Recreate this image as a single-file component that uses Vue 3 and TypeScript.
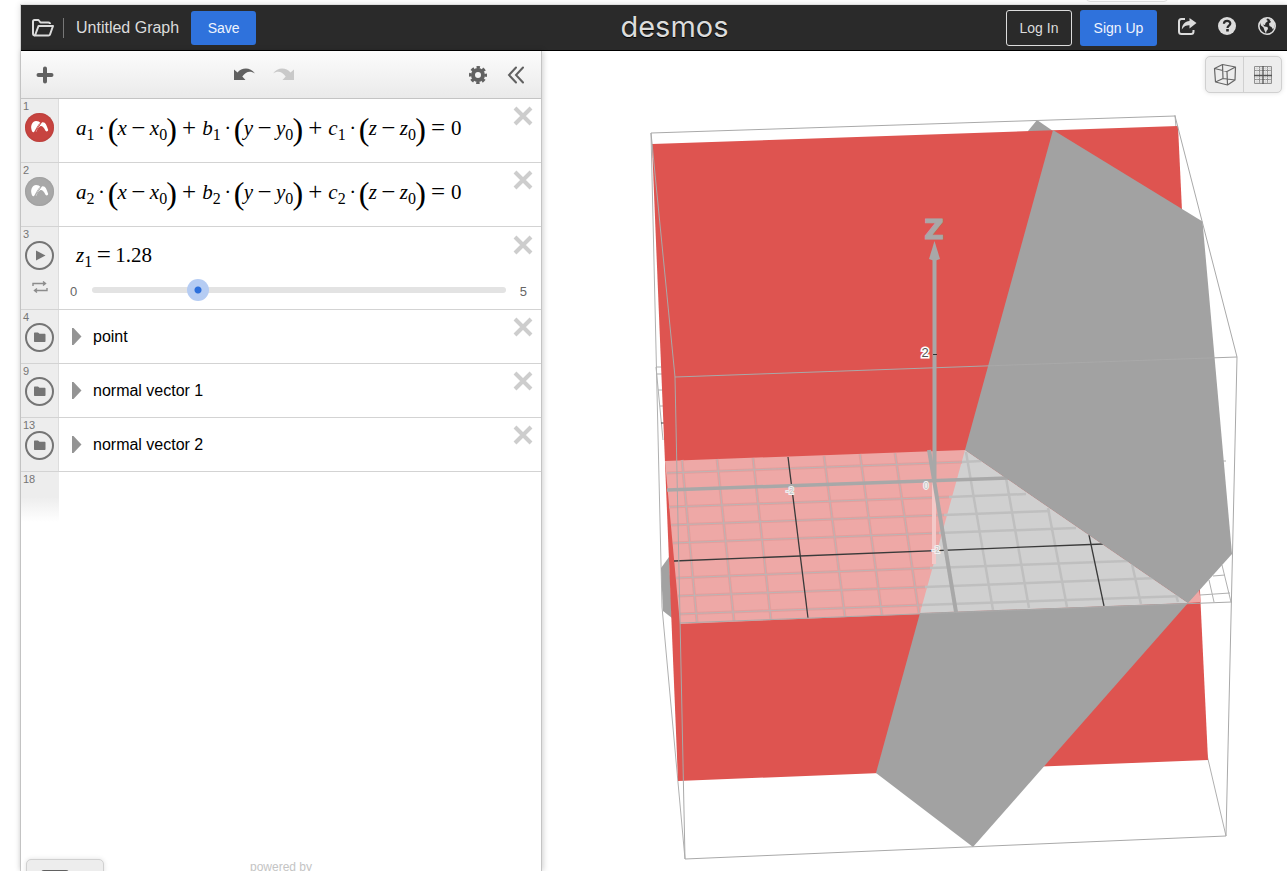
<script setup lang="ts">
import { ref } from 'vue'

type Token = { kind: 'var' | 'dot' | 'paren' | 'minus' | 'op' | 'digit'; text: string; sub?: string }

const v = (text: string, sub?: string): Token => ({ kind: 'var', text, sub })
const term = (coef: string, idx: string, name: string): Token[] => [
  v(coef, idx),
  { kind: 'dot', text: '·' },
  { kind: 'paren', text: '(' },
  v(name),
  { kind: 'minus', text: '−' },
  v(name, '0'),
  { kind: 'paren', text: ')' },
]
const plane = (idx: string): Token[] => [
  ...term('a', idx, 'x'),
  { kind: 'op', text: '+' },
  ...term('b', idx, 'y'),
  { kind: 'op', text: '+' },
  ...term('c', idx, 'z'),
  { kind: 'op', text: '=' },
  { kind: 'digit', text: '0' },
]

const planes = [
  { id: 1, tone: 'red', tokens: plane('1') },
  { id: 2, tone: 'gray', tokens: plane('2') },
]
const folders = [
  { id: 4, name: 'point' },
  { id: 9, name: 'normal vector 1' },
  { id: 13, name: 'normal vector 2' },
]
const z1 = ref(1.28)

type Line = [number, number, number, number]
const pinkGrid: Line[] = [
  [682, 460, 697, 622], [717, 459, 734, 621], [753, 458, 771, 620], [824, 456, 845, 617],
  [860, 454, 882, 615], [895, 453, 919, 613],
  [667, 473, 962, 462], [669, 507, 949, 497], [671, 525, 944, 515], [673, 543, 939, 533],
  [676, 578, 930, 568], [678, 596, 925, 587], [679, 614, 922, 605],
]
const grayGrid: Line[] = [
  [966, 452, 993, 610], [1006, 478, 1029, 608], [1048, 508, 1067, 607], [1132, 564, 1141, 604], [1176, 595, 1178, 602],
  [962, 462, 981, 461], [949, 497, 1026, 494], [944, 515, 1050, 511], [939, 533, 1076, 528],
  [930, 568, 1128, 561], [925, 587, 1158, 578], [922, 605, 1184, 596],
]
const darkGrid: Line[] = [
  [788, 457, 808, 618], [674, 561, 1103, 544], [1089, 535, 1104, 606],
]
const outerGrid: Line[] = [
  [656, 367, 662, 367], [656, 374, 662, 374], [658, 390, 663, 390], [660, 406, 663, 406],
  [1209, 580, 1214, 602], [1222, 565, 1231, 602], [1213, 576, 1225, 575], [1200, 595, 1230, 593],
  [656, 367, 663, 440], [1223, 461, 1226, 461],
]
const boxBack: Line[] = [
  [651, 133, 662, 607], [662, 607, 685, 859], [1175, 115, 1176, 128], [1200, 725, 1226, 836],
]
const boxFront: Line[] = [
  [651, 133, 1175, 116], [1175, 116, 1237, 357], [1237, 357, 1226, 836], [685, 859, 1226, 836],
  [651, 133, 675, 377], [675, 377, 685, 859], [680, 623, 1232, 602],
]
</script>

<template>
  <div class="page">
    <div class="tab-edge"></div>
    <div class="app">
      <header class="header">
        <div class="group">
          <button class="icon-btn" aria-label="Open graph">
            <svg width="22" height="18" viewBox="0 0 22 18" fill="none" stroke="#dcdcdc" stroke-width="2" stroke-linejoin="round">
              <path d="M3 16.500C1.500 16.500 1 15.500 1 14.500V2.500C1 1.500 1.500 1 2.500 1H6.500L8.500 3.500H16.500C17.500 3.500 18 4 18 5" />
              <path d="M3 16.500L6.500 7H21L18 15.500C17.800 16.200 17.300 16.500 16.500 16.500Z" />
            </svg>
          </button>
          <span class="divider"></span>
          <span class="title">Untitled Graph</span>
          <button class="btn primary save">Save</button>
        </div>
        <a class="logo" href="#">desmos</a>
        <div class="group right">
          <button class="btn outline">Log In</button>
          <button class="btn primary signup">Sign Up</button>
          <button class="icon-btn small" aria-label="Share">
            <svg width="20" height="20" viewBox="0 0 20 20">
              <path d="M8 3H4.500C3 3 2 4 2 5.500V15.500C2 17 3 18 4.500 18H14C15.500 18 16.500 17 16.500 15.500V14" fill="none" stroke="#dcdcdc" stroke-width="2" />
              <path d="M12.500 2L19.500 7L12.500 12.500V9.300C9.500 9.200 7 10 4.800 13.500C5 8.500 8 5.300 12.500 5Z" fill="#dcdcdc" />
            </svg>
          </button>
          <button class="icon-btn small" aria-label="Help">
            <svg width="20" height="20" viewBox="0 0 20 20">
              <circle cx="10" cy="10" r="9" fill="#dcdcdc" />
              <path d="M6.900 7.800C7 5.800 8.300 4.900 10.100 4.900C12 4.900 13.300 5.900 13.300 7.500C13.300 9.500 10.500 9.700 10.500 11.900" fill="none" stroke="#2a2a2a" stroke-width="2.200" />
              <rect x="9.200" y="13" width="2.600" height="2.500" fill="#2a2a2a" />
            </svg>
          </button>
          <button class="icon-btn small" aria-label="Language">
            <svg width="20" height="20" viewBox="0 0 20 20">
              <circle cx="10" cy="10" r="8.200" fill="none" stroke="#dcdcdc" stroke-width="1.600" />
              <path d="M3 6.500C4.500 3.500 7 2 10 2L9.500 4L11 5L8.500 7L8 9L6 8.500L7.500 10.500L10.500 11L11 13L9.500 15L9 17.500L7.500 14.500L6.500 11.500L4 9.500ZM12 3L15.500 4L17.500 7.500V11L16 13.500L14.500 11L12.500 10L12 7.500L14 6Z" fill="#dcdcdc" />
            </svg>
          </button>
        </div>
      </header>

      <main class="body">
        <section class="panel">
          <div class="toolbar">
            <button class="tool plus" aria-label="Add item">
              <svg width="18" height="18" viewBox="0 0 18 18" stroke="#616161" stroke-width="4" stroke-linecap="round"><path d="M9 2.500V15.500M2.500 9H15.500" /></svg>
            </button>
            <div class="tools history">
              <button class="tool" aria-label="Undo">
                <svg width="21" height="14" viewBox="0 0 21 14"><path d="M0 1.500L3.500 4.500C7.500 -0.500 16 -1.500 21 5.500C16.500 2.500 12 3 8.300 8.500L11.500 12H0Z" fill="#616161" /></svg>
              </button>
              <button class="tool" aria-label="Redo" disabled>
                <svg width="21" height="14" viewBox="0 0 21 14"><path d="M21 1.500L17.500 4.500C13.500 -0.500 5 -1.500 0 5.500C4.500 2.500 9 3 12.700 8.500L9.500 12H21Z" fill="#c9c9c9" /></svg>
              </button>
            </div>
            <div class="tools">
              <button class="tool" aria-label="Settings">
                <svg width="20" height="20" viewBox="0 0 20 20" fill="none" stroke="#616161">
                  <circle cx="10" cy="10" r="5" stroke-width="4" />
                  <circle cx="10" cy="10" r="7.700" stroke-width="2.600" stroke-dasharray="3.400 2.650" stroke-dashoffset="1.700" />
                </svg>
              </button>
              <button class="tool" aria-label="Hide list">
                <svg width="18" height="18" viewBox="0 0 18 18" fill="none" stroke="#616161" stroke-width="2" stroke-linecap="round"><path d="M9 1.500L2 9L9 16.500M16 1.500L9 9L16 16.500" /></svg>
              </button>
            </div>
          </div>

          <div class="list">
            <div v-for="p in planes" :key="p.id" class="row">
              <div class="gutter">
                <span class="num">{{ p.id }}</span>
                <button class="bubble" :class="p.tone" :aria-label="`Toggle surface ${p.id}`">
                  <svg width="29" height="29" viewBox="0 0 29 29" fill="#fff">
                    <path d="M6.200 15C6 12 7.500 8 11 8C13.500 8 14.500 9 15.400 9.800C12.500 12 11.500 15 9 19.300C7 19.500 6.500 17 6.200 15Z" />
                    <path d="M10.300 19C12 15 14 10.500 17.500 9.300C20.500 9 21.500 12 23.200 17C23 18.500 21.500 18.800 20.500 17.800C19 14.500 17 12.500 15.500 13C13.500 14 12.500 16 11.200 18.800Z" />
                    <path d="M10 19L16.500 9.300" fill="none" :stroke="p.tone === 'red' ? '#c74440' : '#a8a8a8'" stroke-width="1" />
                  </svg>
                </button>
              </div>
              <div class="math">
                <span v-for="(t, i) in p.tokens" :key="i" class="tok" :class="t.kind">{{ t.text }}<sub v-if="t.sub">{{ t.sub }}</sub></span>
              </div>
              <button class="close" :aria-label="`Delete ${p.id}`">
                <svg width="20" height="20" viewBox="0 0 20 20" stroke="#cdcdcd" stroke-width="4"><path d="M2 2L18 18M18 2L2 18" /></svg>
              </button>
            </div>

            <div class="row slider-row">
              <div class="gutter">
                <span class="num">3</span>
                <button class="bubble ring" aria-label="Play">
                  <svg width="25" height="25" viewBox="0 0 25 25"><path d="M9 7.500L18.500 12.500L9 17.500Z" fill="#757575" /></svg>
                </button>
                <button class="loop" aria-label="Loop mode">
                  <svg width="16" height="12" viewBox="0 0 16 12" fill="none" stroke="#8c8c8c" stroke-width="1.400">
                    <path d="M1 5V2.500H13M11 0.500L13.500 2.500L11 4.500M15 7V9.500H3M5 7.500L2.500 9.500L5 11.500" />
                  </svg>
                </button>
              </div>
              <div class="slider-body">
                <div class="math short">
                  <span class="tok var">z<sub>1</sub></span><span class="tok minus">=</span><span class="tok digit">{{ z1 }}</span>
                </div>
                <label class="slider">
                  <span class="bound">0</span>
                  <span class="track"><input v-model.number="z1" type="range" min="0" max="5" step="0.01" aria-label="z1" /></span>
                  <span class="bound end">5</span>
                </label>
              </div>
              <button class="close" aria-label="Delete 3">
                <svg width="20" height="20" viewBox="0 0 20 20" stroke="#cdcdcd" stroke-width="4"><path d="M2 2L18 18M18 2L2 18" /></svg>
              </button>
            </div>

            <div v-for="f in folders" :key="f.id" class="row folder">
              <div class="gutter">
                <span class="num">{{ f.id }}</span>
                <button class="bubble ring" :aria-label="`Toggle folder ${f.name}`">
                  <svg width="25" height="25" viewBox="0 0 25 25"><path d="M7 8.500C7 7.700 7.300 7.500 8 7.500H11L12.500 8.800H17.500C18.200 8.800 18.500 9.200 18.500 9.800V16C18.500 16.700 18.200 17 17.500 17H8C7.300 17 7 16.700 7 16Z" fill="#757575" /></svg>
                </button>
              </div>
              <div class="folder-body">
                <button class="arrow" :aria-label="`Expand ${f.name}`">
                  <svg width="10" height="18" viewBox="0 0 10 18"><path d="M0 0H1.500L9.500 8.500L1.500 17H0Z" fill="#949494" /></svg>
                </button>
                <span>{{ f.name }}</span>
              </div>
              <button class="close" :aria-label="`Delete ${f.name}`">
                <svg width="20" height="20" viewBox="0 0 20 20" stroke="#cdcdcd" stroke-width="4"><path d="M2 2L18 18M18 2L2 18" /></svg>
              </button>
            </div>

            <div class="new-row"><span class="num">18</span></div>
          </div>

          <footer class="foot">
            <button class="keypad" aria-label="Show keypad">
              <svg width="28" height="18" viewBox="0 0 28 18"><rect x="1" y="1" width="26" height="16" rx="2" fill="none" stroke="#616161" stroke-width="2" /></svg>
            </button>
            <span>powered by</span>
          </footer>
        </section>

        <section class="graph">
          <svg class="scene" viewBox="542 51 745 820" role="img" aria-label="3D graph">
            <g stroke="#b0b0b0" stroke-width="1">
              <line v-for="(l, i) in boxBack" :key="i" :x1="l[0]" :y1="l[1]" :x2="l[2]" :y2="l[3]" />
              <line v-for="(l, i) in outerGrid" :key="i" :x1="l[0]" :y1="l[1]" :x2="l[2]" :y2="l[3]" />
              <line x1="661" y1="423" x2="665" y2="423" stroke="#444" />
            </g>
            <polygon points="669,557 661,568 663,611 672,618" fill="#a2a2a2" />
            <polygon points="1028,131 1037,120 1053,131 1053,135 1028,135" fill="#a2a2a2" />
            <polygon points="652,144 1178,126 1208,760 678,781" fill="#de5450" />
            <polygon points="665,461 965,450 1188,603 680,624" fill="#eea8a6" />
            <polygon points="1199,590 1187,603 1201,602" fill="#eea8a6" />
            <polygon points="965,450 1188,603 920,613" fill="#d0d0d0" />
            <g stroke="#e59e9c" stroke-width="3"><line v-for="(l, i) in pinkGrid" :key="i" :x1="l[0]" :y1="l[1]" :x2="l[2]" :y2="l[3]" /></g>
            <g stroke="#bcb4b4" stroke-width="1"><line v-for="(l, i) in pinkGrid" :key="i" :x1="l[0]" :y1="l[1]" :x2="l[2]" :y2="l[3]" /></g>
            <g stroke="#bfbfbf" stroke-width="2.500"><line v-for="(l, i) in grayGrid" :key="i" :x1="l[0]" :y1="l[1]" :x2="l[2]" :y2="l[3]" /></g>
            <g stroke="#3a3a3a" stroke-width="1.300"><line v-for="(l, i) in darkGrid" :key="i" :x1="l[0]" :y1="l[1]" :x2="l[2]" :y2="l[3]" /></g>
            <line x1="934" y1="482" x2="934" y2="564" stroke="#f3c9c8" stroke-width="4" />
            <line x1="667" y1="490" x2="1008" y2="478" stroke="#a8a8a8" stroke-width="3.500" />
            <polygon points="1053,130 1202.500,221.500 1232,554 1188,603 965,450" fill="#a2a2a2" />
            <polygon points="920,613 1188,603 973,847 876,773" fill="#a2a2a2" />
            <g stroke="#a9a9a9" stroke-width="1">
              <line v-for="(l, i) in boxFront" :key="i" :x1="l[0]" :y1="l[1]" :x2="l[2]" :y2="l[3]" />
              <line x1="675" y1="377" x2="1237" y2="357" />
            </g>
            <line x1="929" y1="450" x2="956" y2="612" stroke="#a8a8a8" stroke-width="4" />
            <line x1="934.500" y1="256" x2="934.500" y2="481" stroke="#a8a8a8" stroke-width="4" />
            <polygon points="934.500,241 940,259 934.500,261 929,259" fill="#a8a8a8" />
            <line x1="933" y1="354.500" x2="937" y2="354.500" stroke="#333" stroke-width="1" />
            <text x="934" y="239" class="axis-name">Z</text>
            <text x="925" y="357" class="tick">2</text>
            <g class="flat-tick">
              <text x="926" y="489">0</text>
              <text x="790" y="494">-2</text>
              <text x="936" y="553">-2</text>
            </g>
          </svg>
          <div class="views">
            <button aria-label="3D view">
              <svg width="24" height="24" viewBox="0 0 24 24" fill="none" stroke="#666" stroke-width="1.200" stroke-linejoin="round">
                <path d="M1.500 5.500L14 8.500L22.500 4L9.500 1.500ZM1.500 5.500L2.500 19L14.500 22L22 17L22.500 4M14 8.500L14.500 22M9.500 1.500L10 15.500L2.500 19M10 15.500L22 17" />
              </svg>
            </button>
            <button aria-label="2D view">
              <svg width="20" height="20" viewBox="0 0 20 20" fill="none">
                <path d="M1.500 1.500H18.500V18.500H1.500ZM6.500 1V19M14.500 1V19M1 5.500H19M1 14.500H19" stroke="#909090" stroke-width="1" />
                <path d="M4 2V18M12.500 2V18M8 2V18M17 2V18M2 3.500H18M2 8H18M2 12.500H18M2 17H18" stroke="#ccc" stroke-width="0.600" />
                <path d="M10 1V19M1 10.500H19" stroke="#555" stroke-width="1.300" />
              </svg>
            </button>
          </div>
        </section>
      </main>
    </div>
  </div>
</template>

<style>
body {
  margin: 0;
  background: #fff;
}
</style>

<style scoped>
* {
  box-sizing: border-box;
}
.page {
  position: relative;
  height: 100vh;
  padding: 4px 0 0 20px;
  overflow: hidden;
  font-family: "Liberation Sans", Arial, sans-serif;
}
.tab-edge {
  position: absolute;
  top: -8px;
  right: 119px;
  width: 82px;
  height: 10px;
  border: 1px solid #dcdcdc;
  border-radius: 4px;
}
.app {
  display: flex;
  flex-direction: column;
  height: 100%;
  border-top: 1px solid #ddd;
  border-left: 1px solid #d0d0d0;
  box-shadow: 0 0 6px rgba(0, 0, 0, 0.12);
}
button {
  margin: 0;
  padding: 0;
  border: 0;
  background: none;
  font-family: inherit;
  cursor: pointer;
}
svg {
  display: block;
}
.header {
  display: grid;
  grid-template-columns: 1fr auto 1fr;
  align-items: center;
  flex: none;
  height: 46px;
  padding: 0 10px 0 11px;
  background: #2a2a2a;
  border-bottom: 1px solid #000;
}
.group {
  display: flex;
  align-items: center;
}
.group.right {
  justify-content: flex-end;
}
.divider {
  width: 1px;
  height: 20px;
  margin: 0 12px 0 9px;
  background: #777;
}
.title {
  color: #dcdcdc;
  font-size: 16px;
  line-height: 20px;
}
.btn {
  border-radius: 3px;
  font-size: 14px;
  line-height: 20px;
}
.primary {
  background: #2f72dc;
  color: #f0f4fc;
}
.save {
  width: 65px;
  height: 34px;
  margin-left: 12px;
}
.outline {
  width: 66px;
  height: 36px;
  border: 1px solid #dcdcdc;
  color: #dcdcdc;
}
.signup {
  width: 77px;
  height: 36px;
  margin-left: 8px;
}
.small {
  margin-left: 20px;
  padding-bottom: 4px;
}
.logo {
  padding: 0 0 2px 40px;
  color: #dcdcdc;
  font-family: Inter, sans-serif;
  font-size: 29px;
  line-height: 36px;
  text-decoration: none;
  text-shadow: 0 1px 1px #000;
}
.body {
  display: flex;
  flex: 1;
  min-height: 0;
}
.panel {
  position: relative;
  z-index: 1;
  display: flex;
  flex-direction: column;
  flex: none;
  width: 521px;
  border-right: 1px solid #c4c4c4;
  background: #fff;
  box-shadow: 1px 0 6px rgba(0, 0, 0, 0.2);
}
.toolbar {
  display: flex;
  align-items: center;
  justify-content: space-between;
  flex: none;
  height: 48px;
  padding: 0 16px 0 12px;
  border-bottom: 1px solid #c4c4c4;
  background: linear-gradient(#fcfcfc, #eaeaea);
}
.plus {
  display: flex;
  justify-content: center;
  width: 24px;
}
.tools {
  display: flex;
  align-items: center;
  gap: 19px;
}
.history {
  gap: 18px;
  padding-left: 2px;
}
.list {
  flex: 1;
  min-height: 0;
}
.row {
  display: flex;
  height: 64px;
  border-bottom: 1px solid #d3d3d3;
}
.slider-row {
  height: 83px;
}
.folder {
  height: 54px;
}
.gutter {
  flex: none;
  width: 38px;
  padding: 1px 0 0 2px;
  border-right: 1px solid #ddd;
  background: #ededed;
}
.num {
  display: block;
  color: #757575;
  font-size: 11px;
  line-height: 13px;
}
.folder .num {
  line-height: 12px;
}
.bubble {
  display: block;
  width: 29px;
  height: 29px;
  margin-left: 2px;
  border-radius: 50%;
}
.red {
  background: #c74440;
  box-shadow: inset 0 0 2px #a93733;
}
.gray {
  background: #a8a8a8;
  box-shadow: inset 0 0 2px #8f8f8f;
}
.ring {
  border: 2px solid #757575;
}
.loop {
  display: block;
  margin: 11px 0 0 9px;
}
.math {
  display: flex;
  flex: 1;
  padding: 17px 0 0 17px;
  color: #000;
  font-family: "Liberation Serif", "Times New Roman", serif;
  font-size: 21px;
  line-height: 24px;
  white-space: nowrap;
}
.math.short {
  padding-top: 16px;
}
.var {
  font-style: italic;
}
.tok {
  display: block;
  height: 24px;
}
.tok sub {
  position: relative;
  top: 5px;
  font-size: 16px;
  font-style: normal;
  line-height: 0;
  vertical-align: baseline;
}
.dot,
.paren,
.minus,
.op {
  display: flex;
  justify-content: center;
}
.dot {
  width: 14px;
}
.paren {
  width: 9px;
  padding-top: 1px;
  font-size: 32px;
}
.minus {
  width: 23px;
  font-size: 25px;
}
.op {
  width: 26px;
  font-size: 25px;
}
.close {
  align-self: flex-start;
  flex: none;
  margin: 7px 8px 0 0;
}
.slider-row .close {
  margin-top: 8px;
}
.slider-body {
  flex: 1;
}
.slider {
  display: flex;
  align-items: center;
  margin: 13px -14px 0 11px;
  height: 20px;
  color: #666;
  font-size: 13px;
}
.bound {
  width: 22px;
  padding-top: 2px;
}
.bound.end {
  width: auto;
  margin-left: 14px;
}
.track {
  display: flex;
  align-items: center;
  flex: 1;
  height: 6px;
  border-radius: 3px;
  background: #e3e3e3;
}
.track input {
  flex: none;
  width: calc(100% + 22px);
  height: 22px;
  margin: 0 -11px;
  background: none;
  appearance: none;
}
.track input::-webkit-slider-thumb {
  width: 22px;
  height: 22px;
  border-radius: 50%;
  background: radial-gradient(circle, #2d70dc 2px, #2d70dc 3px, #b5ccf3 4px);
  appearance: none;
}
.folder-body {
  display: flex;
  align-items: center;
  flex: 1;
  gap: 11px;
  padding-left: 13px;
  color: #000;
  font-size: 16px;
}
.new-row {
  width: 38px;
  height: 50px;
  padding: 1px 0 0 2px;
  background: linear-gradient(#ededed 50%, #fff);
}
.foot {
  display: grid;
  grid-template-columns: 1fr auto 1fr;
  flex: none;
  height: 12px;
  padding: 0 5px;
  color: #c4c4c4;
  font-size: 12px;
  line-height: 16px;
}
.keypad {
  display: flex;
  align-items: flex-start;
  width: 78px;
  height: 40px;
  padding: 10px 0 0 14px;
  border: 1px solid #d0d0d0;
  border-radius: 5px;
  background: #ededed;
  box-shadow: 0 0 5px rgba(0, 0, 0, 0.12);
}
.graph {
  position: relative;
  flex: 1;
  min-width: 0;
}
.scene {
  width: 100%;
  height: 100%;
}
.axis-name {
  fill: #a8a8a8;
  stroke: #a8a8a8;
  stroke-width: 1px;
  font: bold 27px "DejaVu Sans", sans-serif;
  text-anchor: middle;
}
.tick {
  fill: #555;
  stroke: #fff;
  stroke-width: 3px;
  paint-order: stroke;
  font: 13px "Liberation Sans", sans-serif;
  text-anchor: middle;
}
.flat-tick {
  fill: #c4c4c4;
  stroke: #f2f2f2;
  stroke-width: 2px;
  paint-order: stroke;
  font: 8px "DejaVu Sans", sans-serif;
  text-anchor: middle;
}
.views {
  position: absolute;
  top: 5px;
  right: 5px;
  display: flex;
  width: 77px;
  height: 37px;
  border: 1px solid #d0d0d0;
  border-radius: 5px;
  background: #ededed;
  box-shadow: 0 0 5px rgba(0, 0, 0, 0.12);
}
.views button {
  display: flex;
  align-items: center;
  justify-content: center;
  flex: 1;
}
.views button + button {
  border-left: 1px solid #d0d0d0;
}
</style>
